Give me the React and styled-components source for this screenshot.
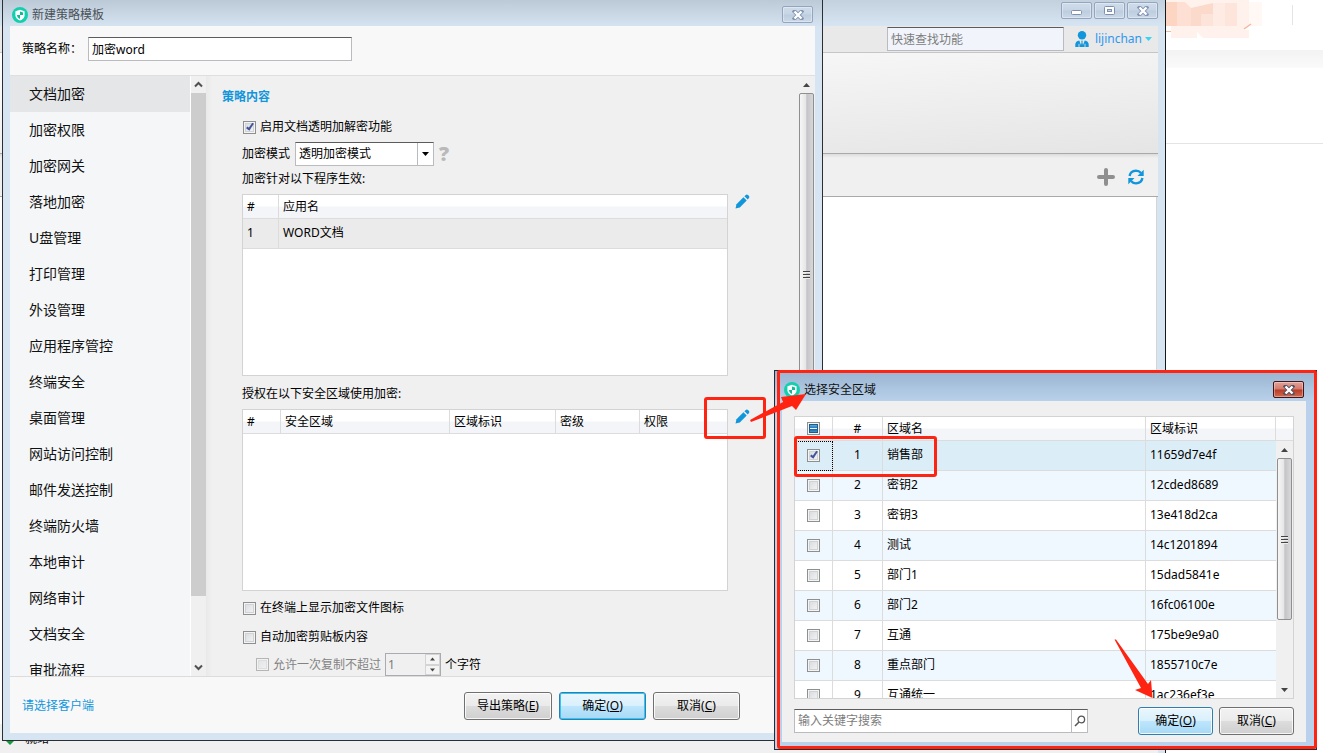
import React from "react";
import styled, { createGlobalStyle, css } from "styled-components";

const RED = "#ff2312";
const BLUE = "#1296db";

const GlobalStyle = createGlobalStyle`
  *, *::before, *::after { box-sizing: border-box; }
  body { margin: 0; background: #fff; overflow: hidden; }
  body, button, input, select, table {
    font-family: "Noto Sans", "Noto Sans CJK SC", sans-serif;
    font-size: 12px;
    line-height: 20px;
    color: #000;
  }
  button { cursor: pointer; }
`;

/* ---------- desktop ---------- */

const Desktop = styled.main`
  position: relative;
  height: 100vh;
  overflow: hidden;
`;

const WebPage = styled.div`
  display: flex;
  flex-direction: column;
  align-items: stretch;
`;

const WebHeader = styled.div`
  height: 50px;
  display: flex;
  justify-content: flex-end;
  gap: 30px;
  padding-right: 30px;
`;

const WebDivider = styled.span`
  width: 1px;
  height: 20px;
  margin-top: 5px;
  background: #e4e4e4;
`;

const WebBand = styled.div`
  height: 94px;
  border-bottom: 1px solid #e4e4e4;
  background: linear-gradient(#f3f3f3, #fafafa 18px, #fff 18px);
`;

/* ---------- shared window parts ---------- */

const WindowButton = styled.button`
  display: grid;
  place-items: center;
  width: 31px;
  height: 17px;
  padding: 0;
  border: 1px solid ${(p) => (p.$danger ? "#43131a" : "#94a6bf")};
  border-radius: 2px;
  background: ${(p) =>
    p.$danger
      ? "linear-gradient(#e3a297, #d4786a 48%, #b93a26 52%, #cf6a50)"
      : "linear-gradient(#cfdcea, #c6d5e5 48%, #bccddf 52%, #cbd9e8)"};
  box-shadow: inset 0 0 0 1px rgba(255, 255, 255, 0.35);
`;

const TitleBar = styled.header`
  display: flex;
  flex: none;
  align-items: center;
  gap: ${(p) => p.$gap || 4}px;
  height: ${(p) => p.$height}px;
  padding: ${(p) => p.$padding};
`;

const WindowTitle = styled.h1`
  flex: 1;
  margin: 0;
  font-size: 12px;
  font-weight: 400;
  line-height: 20px;
  color: ${(p) => p.$color};
`;

const PushButton = styled.button`
  height: 28px;
  width: ${(p) => p.$width}px;
  padding: 0;
  border: 1px solid ${(p) => (p.$primary ? "#2f7fae" : "#707070")};
  border-radius: 3px;
  background: ${(p) =>
    p.$primary
      ? "linear-gradient(#eaf6fd, #d9f0fc 48%, #bee6fd 50%, #a7d9f5)"
      : "linear-gradient(#f2f2f2, #ebebeb 48%, #dddddd 50%, #cfcfcf)"};
  box-shadow: inset 0 0 0 1px ${(p) => (p.$glow ? "#33c5f3" : "rgba(255,255,255,.8)")};
`;

const Checkbox = styled.input`
  appearance: none;
  flex: none;
  display: block;
  position: relative;
  width: 13px;
  height: 13px;
  margin: ${(p) => p.$margin || "0"};
  border: 1px solid #8e8f8f;
  background: linear-gradient(135deg, #d5d9dd, #f6f6f6);
  box-shadow: inset 0 0 0 1px #f4f4f4, inset 0 0 0 2px #d0d3d6;
  &:disabled { opacity: 0.6; }
  &:checked::after {
    content: "";
    position: absolute;
    left: 4px;
    top: 0;
    width: 4px;
    height: 8px;
    border: solid #42549b;
    border-width: 0 2px 2px 0;
    transform: rotate(35deg);
  }
  ${(p) =>
    p.$mixed &&
    css`
      background: linear-gradient(#8fcbe8, #2a7fc0 42%, #e4f3fb 42%, #e4f3fb 54%, #17629f 54%, #57b6e6);
      box-shadow: inset 0 0 0 1px #f4f4f4, inset 0 0 0 2px #1d5c8d;
    `}
`;

const TextBox = styled.input`
  min-width: 0;
  width: ${(p) => p.$width}px;
  height: 24px;
  padding: 0 3px;
  border: 1px solid #b9bbbe;
  border-top-color: #5c5c5c;
  border-radius: 0;
  background: ${(p) => p.$bg || "#fff"};
  outline: none;
  &::placeholder { color: #7d7d7d; opacity: 1; }
`;

/* ---------- scroll bar ---------- */

const ScrollTrack = styled.div`
  display: flex;
  flex: ${(p) => p.$flex || "none"};
  flex-direction: column;
  width: ${(p) => p.$width}px;
  min-height: 0;
  background: #f0f0f0;
`;

const ScrollButton = styled.button`
  display: grid;
  place-items: center;
  flex: none;
  height: 17px;
  padding: 0;
  border: 0;
  background: transparent;
`;

const GlossyThumb = styled.div`
  display: grid;
  place-items: center;
  align-content: center;
  gap: 2px;
  flex: none;
  height: ${(p) => p.$height}px;
  margin: 0 1px;
  border: 1px solid #8f8f8f;
  border-radius: 2px;
  background: linear-gradient(90deg, #f6f6f6, #e6e6e8 45%, #c4c4c8 52%, #d8d8da);
`;

const GripLine = styled.span`
  width: 7px;
  height: 1px;
  background: #444;
  box-shadow: 0 1px 0 #eee;
`;

const FlatThumb = styled.div`
  flex: none;
  height: 503px;
  background: #cdcdcd;
`;

const ScrollSpace = styled.div`
  flex: 1;
`;

/* ---------- management console (rear window) ---------- */

const ConsoleWindow = styled.section`
  position: absolute;
  inset: 0 157px 0 0;
  display: flex;
  flex-direction: column;
  padding-right: 7px;
  border-right: 1px solid #16191c;
  background: linear-gradient(#c3d0de, #d7e4f1 26px);
`;

const ConsoleTools = styled.div`
  display: flex;
  flex: none;
  align-items: center;
  justify-content: flex-end;
  height: 27px;
  padding-right: 6px;
  border-bottom: 1px solid #c6c6c6;
  background: #e9e9e9;
`;

const UserMenu = styled.button`
  display: flex;
  align-items: center;
  margin-left: 11px;
  padding: 0;
  border: 0;
  background: none;
  color: #2f97f0;
`;

const UserName = styled.span`
  margin: 0 3px 0 6px;
`;

const Ribbon = styled.div`
  flex: none;
  height: 101px;
  border-bottom: 1px solid #a9a9a9;
  background: linear-gradient(176deg, #fefefe, #f3f3f3 45%, #e5e5e5);
`;

const ConsoleActions = styled.div`
  display: flex;
  flex: none;
  align-items: center;
  justify-content: flex-end;
  gap: 13px;
  height: 43px;
  padding: 4px 14px 0 0;
  border-bottom: 1px solid #a9a9a9;
  background: linear-gradient(#dcdcdc, #f0f0f0 4px);
`;

const IconButton = styled.button`
  display: block;
  height: 18px;
  padding: 0;
  border: 0;
  background: none;
`;

const ConsoleBody = styled.div`
  flex: 1;
  margin-right: 1px;
  border-right: 1px solid #d5d5d5;
  background: #fff;
`;

const StatusBar = styled.footer`
  display: flex;
  flex: none;
  align-items: center;
  gap: 9px;
  height: 29px;
  padding: 0 4px;
  background: #f0f0f0;
`;

/* ---------- policy window ---------- */

const PolicyWindow = styled.section`
  position: absolute;
  inset: 0 500px 12px 2px;
  display: flex;
  flex-direction: column;
  padding: 0 7px 7px;
  border: solid #2b2f33;
  border-width: 0 1px 1px;
  background: linear-gradient(#bccad8, #d7e4f1 28px);
`;

const NameBar = styled.div`
  display: flex;
  flex: none;
  align-items: center;
  gap: 6px;
  padding: 11px 12px 14px;
  border-bottom: 1px solid #dfdfdf;
  background: #f8f8f8;
`;

const NameLabel = styled.label`
  line-height: 24px;
`;

const PolicyBody = styled.div`
  display: flex;
  flex: 1;
  min-height: 0;
  background: #f0f0f0;
`;

const Categories = styled.nav`
  flex: none;
  width: 181px;
  overflow: hidden;
  border-right: 1px solid #fff;
  background: #f4f6f8;
`;

const Category = styled.a`
  display: block;
  height: 36px;
  padding-left: 19px;
  font-size: 14px;
  line-height: 36px;
  color: #111;
  text-decoration: none;
  background: ${(p) => (p.$current ? "#e5e6e8" : "transparent")};
`;

const Settings = styled.div`
  flex: 1;
  min-width: 0;
  overflow: hidden;
  padding: 10px 0 0 36px;
  background: linear-gradient(90deg, #e9e9e9, #f0f0f0 6px);
`;

const SectionTitle = styled.h2`
  margin: 0 0 9px -20px;
  font-size: 12px;
  font-weight: 700;
  line-height: 22px;
  color: ${BLUE};
`;

const Line = styled.div`
  display: flex;
  align-items: center;
  gap: ${(p) => p.$gap || 4}px;
  margin-top: ${(p) => p.$top || 0}px;
  padding-left: ${(p) => p.$indent || 0}px;
  color: ${(p) => (p.$muted ? "#838383" : "#000")};
`;

const Caption = styled.p`
  margin: ${(p) => p.$top}px 0 5px;
`;

const SelectBox = styled.div`
  position: relative;
  width: 139px;
  height: 24px;
`;

const ModeSelect = styled.select`
  appearance: none;
  width: 100%;
  height: 24px;
  padding: 0 20px 0 3px;
  border: 1px solid #b9bbbe;
  border-top-color: #5c5c5c;
  border-radius: 0;
  background: linear-gradient(#b9bbbe, #b9bbbe) right 15px top / 1px 100% no-repeat #fff;
`;

const SelectArrow = styled.svg`
  position: absolute;
  right: 5px;
  top: 10px;
  pointer-events: none;
`;

const HelpMark = styled.button`
  padding: 0;
  border: 0;
  background: none;
  font-size: 20px;
  font-weight: 900;
  line-height: 22px;
  color: #b9b9b9;
`;

const ListRow = styled.div`
  display: flex;
`;

const ListFrame = styled.div`
  flex: 1;
  height: 182px;
  border: 1px solid #d3d3d3;
  background: #fff;
`;

const ListAside = styled.div`
  position: relative;
  width: 70px;
  padding-left: 7px;
`;

const DataTable = styled.table`
  width: 100%;
  border-collapse: separate;
  border-spacing: 0;
  table-layout: fixed;
`;

const HeadCell = styled.th`
  height: 24px;
  padding: 0 4px;
  border: solid #dcdcdc;
  border-width: 0 1px 1px 0;
  background: linear-gradient(#fff 48%, #f3f5f8 52%, #f3f5f8);
  font-weight: 400;
  line-height: 20px;
  text-align: ${(p) => p.$align || "left"};
  &:last-child { border-right-width: ${(p) => (p.$keepLine ? 1 : 0)}px; }
`;

const Cell = styled.td`
  height: 30px;
  padding: ${(p) => (p.$focus !== undefined ? "0 4px" : "0 4px 2px")};
  border: solid #dcdcdc;
  border-width: 0 1px 1px 0;
  line-height: 20px;
  text-align: ${(p) => p.$align || "left"};
  &:last-child { border-right-width: 0; }
  ${(p) => p.$focus && css`outline: 1px dotted #000; outline-offset: -1px;`}
`;

const Row = styled.tr`
  background: ${(p) => p.$bg};
`;

const Spinner = styled.div`
  display: flex;
  width: 56px;
  height: 23px;
  border: 1px solid #a9abae;
  background: #f0f0f0;
`;

const SpinnerInput = styled.input`
  flex: 1;
  min-width: 0;
  padding: 0 2px;
  border: 0;
  background: transparent;
  color: #7c7c7c;
`;

const SpinnerKeys = styled.div`
  display: grid;
  width: 15px;
  grid-template-rows: 1fr 1fr;
`;

const SpinnerKey = styled.button`
  display: grid;
  place-items: center;
  min-height: 0;
  padding: 0;
  border: 1px solid #d4d4d4;
  background: #f4f4f4;
`;

const PolicyFooter = styled.footer`
  display: flex;
  flex: none;
  align-items: center;
  gap: 7px;
  height: 57px;
  padding: 2px 75px 0 12px;
  border-top: 1px solid #dcdcdc;
  background: #f8f8f8;
`;

const ClientLink = styled.a`
  margin-right: auto;
  color: ${BLUE};
  text-decoration: none;
`;

/* ---------- zone picker (front window) ---------- */

const ZoneWindow = styled.section`
  position: absolute;
  right: 6px;
  bottom: 3px;
  display: flex;
  flex-direction: column;
  width: 543px;
  height: 380px;
  padding: 0 10px 7px 7px;
  border: 1px solid #262b30;
  background: linear-gradient(#99b4d1, #b9d1ea 30px);
`;

const ZoneContent = styled.div`
  display: flex;
  flex: 1;
  flex-direction: column;
  gap: 8px;
  min-height: 0;
  padding: 15px 12px 7px;
  background: #f0f0f0;
`;

const ZoneList = styled.div`
  position: relative;
  display: flex;
  flex: 1;
  min-height: 0;
  border: 1px solid #d3d3d3;
  background: #fff;
`;

const ZoneRows = styled.div`
  flex: 1;
  min-width: 0;
  overflow: hidden;
`;

const ZoneScroll = styled.div`
  display: flex;
  flex-direction: column;
  width: 17px;
`;

const ZoneScrollCap = styled.div`
  flex: none;
  height: 24px;
  border-bottom: 1px solid #dcdcdc;
  background: linear-gradient(#fff 48%, #f3f5f8 52%, #f3f5f8);
`;

const ZoneFooter = styled.div`
  display: flex;
  align-items: center;
  gap: 6px;
`;

const SearchBox = styled.div`
  display: flex;
  width: 294px;
  height: 24px;
  margin-right: auto;
  border: 1px solid #b9bbbe;
  border-top-color: #5c5c5c;
  background: #fff;
`;

const SearchInput = styled.input`
  flex: 1;
  min-width: 0;
  padding: 0 3px;
  border: 0;
  background: transparent;
  outline: none;
  &::placeholder { color: #7d7d7d; opacity: 1; }
`;

const SearchButton = styled.button`
  display: grid;
  place-items: center;
  width: 16px;
  padding: 0;
  border: 0;
  border-left: 1px solid #b9bbbe;
  background: #fff;
`;

const ButtonSlot = styled.div`
  position: relative;
`;

/* ---------- red call-outs ---------- */

const CallOut = styled.div`
  position: absolute;
  z-index: 2;
  left: ${(p) => p.$left}px;
  top: ${(p) => p.$top}px;
  width: ${(p) => p.$width}px;
  height: ${(p) => p.$height}px;
  border: 3px solid ${RED};
  border-radius: 3px;
  pointer-events: none;
`;

const WindowCallOut = styled.div`
  position: absolute;
  z-index: 2;
  inset: -1px -1px 0 2px;
  border: 3px solid ${RED};
  border-radius: 3px;
  pointer-events: none;
`;

const CallOutArrow = styled.svg`
  position: absolute;
  z-index: 3;
  left: ${(p) => p.$left}px;
  top: ${(p) => p.$top}px;
  fill: ${RED};
  pointer-events: none;
`;

/* ---------- drawings ---------- */

const Logo = () => (
  <svg width="16" height="16" viewBox="0 0 16 16" aria-hidden="true">
    <circle cx="8" cy="8" r="8" fill="#12cfae" />
    <path d="M8 2.8 12.6 4.3V8.2C12.6 10.8 10.5 12.6 8 13.6 5.5 12.6 3.4 10.8 3.4 8.2V4.3Z" fill="#fff" />
    <path d="M8 4.6 11 5.5V8H8ZM8 8V12C6.3 11.2 5 10 5 8Z" fill="#12b898" />
  </svg>
);

const CrossGlyph = ({ edge }) => (
  <svg width="12" height="10" viewBox="0 0 12 10" aria-hidden="true">
    <path d="M2.5 1.5 9.5 8.5M9.5 1.5 2.5 8.5" stroke={edge} strokeWidth="4" strokeLinecap="square" />
    <path d="M2.5 1.5 9.5 8.5M9.5 1.5 2.5 8.5" stroke="#fff" strokeWidth="2.4" />
  </svg>
);

const MinimizeGlyph = () => (
  <svg width="12" height="10" viewBox="0 0 12 10" aria-hidden="true">
    <rect x="0.5" y="4.5" width="10" height="4" rx="1" fill="#fff" stroke="#7f8fae" />
  </svg>
);

const MaximizeGlyph = () => (
  <svg width="11" height="9" viewBox="0 0 11 9" aria-hidden="true">
    <rect x="0.5" y="0.5" width="10" height="8" rx="1" fill="#fff" stroke="#7f8fae" />
    <rect x="3.5" y="3.5" width="4" height="2" fill="#c6d5e5" stroke="#7f8fae" />
  </svg>
);

const Triangle = ({ down, color = "#444", size = 7 }) => (
  <svg width={size} height="4" viewBox="0 0 7 4" aria-hidden="true">
    <path d={down ? "M0 0H7L3.5 4Z" : "M0 4H7L3.5 0Z"} fill={color} />
  </svg>
);

const Chevron = ({ down }) => (
  <svg width="9" height="7" viewBox="0 0 9 7" aria-hidden="true">
    <path d={down ? "M1 1.5 4.5 5 8 1.5" : "M1 5.5 4.5 2 8 5.5"} fill="none" stroke="#505050" strokeWidth="2" />
  </svg>
);

const PencilGlyph = () => (
  <svg width="15" height="15" viewBox="0 0 15 15" aria-hidden="true">
    <path d="M0.5 14.5 1.5 10.2 8.4 3.3 11.7 6.6 4.8 13.5Z" fill={BLUE} />
    <path d="M9.4 2.3 10.8 0.9Q12 0.2 13 1.1L14 2.1Q14.8 3.1 14 4.1L12.7 5.6Z" fill={BLUE} />
  </svg>
);

const UserGlyph = () => (
  <svg width="14" height="17" viewBox="0 0 14 17" aria-hidden="true">
    <circle cx="7" cy="4.3" r="4.2" fill={BLUE} />
    <path d="M0.3 16V13.3Q0.5 10.2 4.3 9.5L6 14 6.6 11 6.1 9.8H7.9L7.4 11 8 14 9.7 9.5Q13.5 10.2 13.7 13.3V16Z" fill={BLUE} />
    <path d="M4 12.8V16M10 12.8V16" stroke="#e9e9e9" strokeWidth="0.8" />
  </svg>
);

const PlusGlyph = () => (
  <svg width="18" height="18" viewBox="0 0 18 18" aria-hidden="true">
    <path d="M9 2V16M2 9H16" stroke="#8f8f8f" strokeWidth="4" strokeLinecap="round" />
  </svg>
);

const RefreshGlyph = () => (
  <svg width="16" height="18" viewBox="0 0 16 18" aria-hidden="true">
    <path d="M1.6 8Q2.4 3 8 2.6 11 2.6 13 5M14.4 10Q13.6 15 8 15.4 5 15.4 3 13" fill="none" stroke={BLUE} strokeWidth="2.4" />
    <path d="M15.7 1.8V8H9.5ZM0.3 16.2V10H6.5Z" fill={BLUE} />
  </svg>
);

const SearchGlyph = () => (
  <svg width="12" height="12" viewBox="0 0 12 12" aria-hidden="true">
    <circle cx="7.3" cy="4.5" r="3.3" fill="none" stroke="#555" strokeWidth="1.3" />
    <path d="M5 7 1 11" stroke="#555" strokeWidth="1.6" />
  </svg>
);

const BrandMosaic = () => (
  <svg width="97" height="38" viewBox="0 0 97 38" aria-hidden="true">
    <path d="M0 0H84V26L78 30H84V38H38L32 32V38H6V26H0Z" fill="#fff1ec" />
    <path d="M84 2H97V26H84Z" fill="#fff8f5" />
    <path d="M0 2H12V26H0Z" fill="#fcd5c3" />
    <path d="M12 2H20L26 8V26H12Z" fill="#fde0d3" />
    <path d="M26 8 48 3V14L36 15V26H26Z" fill="#fcdacb" />
    <path d="M36 14H48V26H36Z" fill="#fde4da" />
    <path d="M48 3H60V26H48Z" fill="#fdebe4" />
    <path d="M60 3H72V26H60Z" fill="#fde5dc" />
    <path d="M79 29 86 24" stroke="#f6b79c" strokeWidth="1.5" />
    <path d="M0 31.5H6" stroke="#f6b79c" />
  </svg>
);

const StatusGlyph = () => (
  <svg width="12" height="12" viewBox="0 0 12 12" aria-hidden="true">
    <path d="M6 0 12 6 6 12 0 6Z" fill="#159a3c" />
  </svg>
);

/* ---------- data ---------- */

const categories = [
  "文档加密", "加密权限", "加密网关", "落地加密", "U盘管理", "打印管理",
  "外设管理", "应用程序管控", "终端安全", "桌面管理", "网站访问控制",
  "邮件发送控制", "终端防火墙", "本地审计", "网络审计", "文档安全", "审批流程",
];

const zones = [
  ["销售部", "11659d7e4f"],
  ["密钥2", "12cded8689"],
  ["密钥3", "13e418d2ca"],
  ["测试", "14c1201894"],
  ["部门1", "15dad5841e"],
  ["部门2", "16fc06100e"],
  ["互通", "175be9e9a0"],
  ["重点部门", "1855710c7e"],
  ["互通统一", "1ac236ef3e"],
];

const zoneBackground = (index) => {
  if (index === 0) return "#dbeef7";
  return index % 2 ? "#f0f8ff" : "#fff";
};

const GlossyScroll = ({ thumb, flex, width }) => (
  <ScrollTrack $width={width} $flex={flex} aria-hidden="true">
    <ScrollButton tabIndex={-1}><Triangle /></ScrollButton>
    <GlossyThumb $height={thumb}>
      <GripLine /><GripLine /><GripLine />
    </GlossyThumb>
    <ScrollSpace />
    <ScrollButton tabIndex={-1}><Triangle down /></ScrollButton>
  </ScrollTrack>
);

/* ---------- windows ---------- */

const Console = () => (
  <ConsoleWindow>
    <TitleBar $height={26} $padding="0 0 5px" $gap={2}>
      <WindowTitle as="span" />
      <WindowButton aria-label="最小化"><MinimizeGlyph /></WindowButton>
      <WindowButton aria-label="最大化"><MaximizeGlyph /></WindowButton>
      <WindowButton aria-label="关闭"><CrossGlyph edge="#8595b3" /></WindowButton>
    </TitleBar>
    <ConsoleTools>
      <TextBox $bg="#f1f5fb" $width={177} aria-label="快速查找功能" placeholder="快速查找功能" />
      <UserMenu>
        <UserGlyph />
        <UserName>lijinchan</UserName>
        <Triangle down color="#35d3f5" />
      </UserMenu>
    </ConsoleTools>
    <Ribbon />
    <ConsoleActions>
      <IconButton aria-label="添加"><PlusGlyph /></IconButton>
      <IconButton aria-label="刷新"><RefreshGlyph /></IconButton>
    </ConsoleActions>
    <ConsoleBody />
    <StatusBar>
      <StatusGlyph />
      <span>就绪</span>
    </StatusBar>
  </ConsoleWindow>
);

const Policy = () => (
  <PolicyWindow>
    <TitleBar $height={26} $padding="3px 2px 0">
      <Logo />
      <WindowTitle $color="#4a5157">新建策略模板</WindowTitle>
      <WindowButton aria-label="关闭"><CrossGlyph edge="#8595b3" /></WindowButton>
    </TitleBar>
    <NameBar>
      <NameLabel htmlFor="policy-name">策略名称：</NameLabel>
      <TextBox id="policy-name" $width={264} defaultValue="加密word" />
    </NameBar>
    <PolicyBody>
      <Categories>
        {categories.map((name, i) => (
          <Category key={name} href="#" $current={i === 0}>{name}</Category>
        ))}
      </Categories>
      <ScrollTrack $width={15} aria-hidden="true">
        <ScrollButton tabIndex={-1}><Chevron /></ScrollButton>
        <FlatThumb />
        <ScrollSpace />
        <ScrollButton tabIndex={-1}><Chevron down /></ScrollButton>
      </ScrollTrack>
      <Settings>
        <SectionTitle>策略内容</SectionTitle>
        <Line>
          <Checkbox id="transparent" type="checkbox" defaultChecked $margin="0 0 0 1px" />
          <label htmlFor="transparent">启用文档透明加解密功能</label>
        </Line>
        <Line $top={5} $gap={5}>
          <label htmlFor="mode">加密模式</label>
          <SelectBox>
            <ModeSelect id="mode">
              <option>透明加密模式</option>
            </ModeSelect>
            <SelectArrow width="7" height="4" viewBox="0 0 7 4" aria-hidden="true">
              <path d="M0 0H7L3.5 4Z" />
            </SelectArrow>
          </SelectBox>
          <HelpMark>?</HelpMark>
        </Line>
        <Caption $top={3}>加密针对以下程序生效:</Caption>
        <ListRow>
          <ListFrame>
            <DataTable>
              <colgroup><col width="36" /><col /></colgroup>
              <thead>
                <tr><HeadCell>#</HeadCell><HeadCell>应用名</HeadCell></tr>
              </thead>
              <tbody>
                <Row $bg="#ebebeb"><Cell>1</Cell><Cell>WORD文档</Cell></Row>
              </tbody>
            </DataTable>
          </ListFrame>
          <ListAside>
            <IconButton aria-label="编辑程序"><PencilGlyph /></IconButton>
          </ListAside>
        </ListRow>
        <Caption $top={8}>授权在以下安全区域使用加密:</Caption>
        <ListRow>
          <ListFrame>
            <DataTable>
              <colgroup>
                <col width="38" /><col width="169" /><col width="106" /><col width="84" /><col />
              </colgroup>
              <thead>
                <tr>
                  <HeadCell>#</HeadCell>
                  <HeadCell>安全区域</HeadCell>
                  <HeadCell>区域标识</HeadCell>
                  <HeadCell>密级</HeadCell>
                  <HeadCell>权限</HeadCell>
                </tr>
              </thead>
            </DataTable>
          </ListFrame>
          <ListAside>
            <IconButton aria-label="编辑安全区域"><PencilGlyph /></IconButton>
            <CallOut $left={-24} $top={-12} $width={62} $height={42} />
          </ListAside>
        </ListRow>
        <Line $top={7}>
          <Checkbox id="show-icon" type="checkbox" $margin="0 0 0 1px" />
          <label htmlFor="show-icon">在终端上显示加密文件图标</label>
        </Line>
        <Line $top={9}>
          <Checkbox id="clipboard" type="checkbox" $margin="0 0 0 1px" />
          <label htmlFor="clipboard">自动加密剪贴板内容</label>
        </Line>
        <Line $top={6} $indent={14}>
          <Checkbox id="limit" type="checkbox" disabled />
          <Line as="label" htmlFor="limit" $muted>允许一次复制不超过</Line>
          <Spinner>
            <SpinnerInput aria-label="字符数" defaultValue="1" disabled />
            <SpinnerKeys>
              <SpinnerKey aria-label="增加" disabled><Triangle size={5} /></SpinnerKey>
              <SpinnerKey aria-label="减少" disabled><Triangle down size={5} /></SpinnerKey>
            </SpinnerKeys>
          </Spinner>
          <span>个字符</span>
        </Line>
      </Settings>
      <GlossyScroll thumb={362} width={17} />
    </PolicyBody>
    <PolicyFooter>
      <ClientLink href="#">请选择客户端</ClientLink>
      <PushButton $width={88}>导出策略(<u>E</u>)</PushButton>
      <PushButton $width={87} $primary $glow>确定(<u>O</u>)</PushButton>
      <PushButton $width={87}>取消(<u>C</u>)</PushButton>
    </PolicyFooter>
  </PolicyWindow>
);

const ZonePicker = () => (
  <ZoneWindow>
    <TitleBar $height={30} $padding="7px 2px 0">
      <Logo />
      <WindowTitle $color="#111">选择安全区域</WindowTitle>
      <WindowButton $danger aria-label="关闭"><CrossGlyph edge="#4a5568" /></WindowButton>
    </TitleBar>
    <ZoneContent>
      <ZoneList>
        <ZoneRows>
          <DataTable>
            <colgroup>
              <col width="38" /><col width="50" /><col /><col width="130" />
            </colgroup>
            <thead>
              <tr>
                <HeadCell>
                  <Checkbox type="checkbox" aria-label="全选" $mixed $margin="0 auto" />
                </HeadCell>
                <HeadCell $align="center">#</HeadCell>
                <HeadCell>区域名</HeadCell>
                <HeadCell $keepLine>区域标识</HeadCell>
              </tr>
            </thead>
            <tbody>
              {zones.map(([name, id], i) => (
                <Row key={id} $bg={zoneBackground(i)}>
                  <Cell $focus={i === 0}>
                    <Checkbox type="checkbox" aria-label={name} defaultChecked={i === 0} $margin="0 auto" />
                  </Cell>
                  <Cell $align="center">{i + 1}</Cell>
                  <Cell>{name}</Cell>
                  <Cell>{id}</Cell>
                </Row>
              ))}
            </tbody>
          </DataTable>
        </ZoneRows>
        <ZoneScroll>
          <ZoneScrollCap />
          <GlossyScroll thumb={162} width={17} flex="1" />
        </ZoneScroll>
        <CallOut $left={-1} $top={19} $width={143} $height={41} />
      </ZoneList>
      <ZoneFooter>
        <SearchBox>
          <SearchInput aria-label="输入关键字搜索" placeholder="输入关键字搜索" />
          <SearchButton aria-label="搜索"><SearchGlyph /></SearchButton>
        </SearchBox>
        <ButtonSlot>
          <PushButton $width={75} $primary>确定(<u>O</u>)</PushButton>
          <CallOutArrow $left={-24} $top={-68} width="40" height="60" viewBox="0 0 40 60">
            <path d="M0.5 0.5 2 0.5 34 45 37 41 38.5 59 21 51 27 49Z" />
          </CallOutArrow>
        </ButtonSlot>
        <PushButton $width={75}>取消(<u>C</u>)</PushButton>
      </ZoneFooter>
    </ZoneContent>
    <WindowCallOut />
    <CallOutArrow $left={-26} $top={20} width="60" height="36" viewBox="0 0 60 36">
      <path d="M1 29 34 11 32 6 57 3 47 19 43 15 2 31Z" />
    </CallOutArrow>
  </ZoneWindow>
);

export default function App() {
  return (
    <Desktop>
      <GlobalStyle />
      <WebPage>
        <WebHeader>
          <BrandMosaic />
          <WebDivider />
        </WebHeader>
        <WebBand />
      </WebPage>
      <Console />
      <Policy />
      <ZonePicker />
    </Desktop>
  );
}
